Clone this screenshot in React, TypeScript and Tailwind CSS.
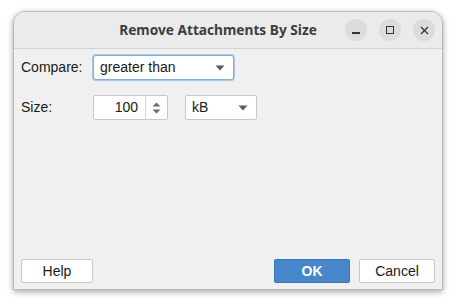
import React from 'react';

const font = { fontFamily: '"Liberation Sans", Arial, sans-serif' };

const Caret = () => (
  <svg width="10" height="6" viewBox="0 0 10 6" className="shrink-0">
    <path d="M0.5 0.5 L9.5 0.5 L5 5.5 Z" fill="#5a5a5a" />
  </svg>
);

const App: React.FC = () => {
  return (
    <div className="w-[456px] h-[307px] bg-white overflow-hidden pt-[11px] pl-[13px]" style={font}>
      {/* window */}
      <div className="w-[430px] h-[279px] flex flex-col rounded-t-[12px] border border-[#b9b9b9] bg-[#f0f0f0] shadow-[0_2px_6px_rgba(0,0,0,0.35)] overflow-hidden">
        {/* title bar */}
        <div className="h-[37px] shrink-0 flex items-center relative bg-[#ebebeb] border-b border-[#d4d4d4]">
          <div
            className="flex-1 text-center text-[13.7px] font-bold text-[#3d3d3d] pr-[20px]"
            style={{ fontFamily: '"Noto Sans", "Open Sans", sans-serif' }}
          >
            Remove Attachments By Size
          </div>
          <div className="absolute right-[7px] top-[7px] flex gap-[12px]">
            <div className="w-[22px] h-[22px] rounded-full bg-[#dcdcdc] flex items-center justify-center">
              <div className="w-[8px] h-[1.5px] bg-[#333] mt-[6px]" />
            </div>
            <div className="w-[22px] h-[22px] rounded-full bg-[#dcdcdc] flex items-center justify-center">
              <div className="w-[8px] h-[8px] border border-[#333]" />
            </div>
            <div className="w-[22px] h-[22px] rounded-full bg-[#dcdcdc] flex items-center justify-center">
              <svg width="9" height="9" viewBox="0 0 9 9">
                <path d="M1 1 L8 8 M8 1 L1 8" stroke="#333" strokeWidth="1.3" />
              </svg>
            </div>
          </div>
        </div>

        {/* body */}
        <div className="flex-1 flex flex-col px-[7px] pt-[6px] pb-[6px] text-[14px] text-[#1a1a1a]">
          <div className="flex items-center h-[25px]">
            <div className="w-[72px]">Compare:</div>
            <div className="w-[141px] h-[25px] rounded-[3px] border border-[#83acd9] shadow-[0_0_0_1px_#a9c8ea] bg-white flex items-center pl-[6px] pr-[8px]">
              <span className="flex-1">greater than</span>
              <Caret />
            </div>
          </div>

          <div className="flex items-center h-[25px] mt-[15px]">
            <div className="w-[72px]">Size:</div>
            <div className="w-[75px] h-[25px] rounded-[2px] border border-[#c8c8c8] bg-white flex items-stretch">
              <div className="flex-1 text-right pr-[7px] leading-[23px]">100</div>
              <div className="w-[22px] border-l border-[#d4d4d4] flex flex-col items-center justify-center gap-[2px]">
                <svg width="9" height="5" viewBox="0 0 9 5">
                  <path d="M0.5 4.5 L8.5 4.5 L4.5 0.5 Z" fill="#6a6a6a" />
                </svg>
                <svg width="9" height="5" viewBox="0 0 9 5">
                  <path d="M0.5 0.5 L8.5 0.5 L4.5 4.5 Z" fill="#6a6a6a" />
                </svg>
              </div>
            </div>
            <div className="ml-[17px] w-[72px] h-[25px] rounded-[2px] border border-[#c8c8c8] bg-white flex items-center pl-[6px] pr-[8px]">
              <span className="flex-1">kB</span>
              <Caret />
            </div>
          </div>

          <div className="mt-auto flex items-center">
            <button className="w-[72px] h-[24px] rounded-[2px] border border-[#c8c8c8] bg-white text-[14px]">Help</button>
            <div className="flex-1" />
            <button className="w-[76px] h-[24px] rounded-[2px] border border-[#3b78b8] bg-[#4687c9] text-white font-bold text-[14px]">OK</button>
            <button className="ml-[9px] w-[76px] h-[24px] rounded-[2px] border border-[#c8c8c8] bg-white text-[14px]">Cancel</button>
          </div>
        </div>
      </div>
    </div>
  );
};

export default App;
